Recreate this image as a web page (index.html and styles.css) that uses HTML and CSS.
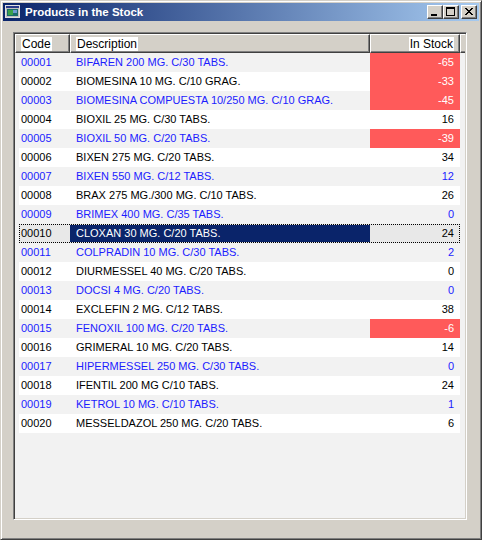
FILE: index.html
```html
<!DOCTYPE html>
<html>
<head>
<meta charset="utf-8">
<title>Products in the Stock</title>
<link rel="stylesheet" href="styles.css">
</head>
<body>
<div class="window">
  <div class="titlebar">
    <svg class="app-icon" width="16" height="16" viewBox="0 0 16 16">
      <rect x="0.5" y="1.5" width="14" height="12" fill="#c0c0c0" stroke="#e0e0e0"/>
      <rect x="1" y="2" width="13" height="2" fill="#2a3a8a"/>
      <rect x="2" y="5" width="11" height="7" fill="#1a6a6a"/>
      <rect x="3" y="6" width="5" height="5" fill="#3aa04a"/>
      <rect x="8" y="6" width="4" height="3" fill="#6a9ad0"/>
    </svg>
    <span class="title">Products in the Stock</span>
    <div class="controls">
      <span class="cbtn"><svg width="14" height="12" viewBox="0 0 14 12"><rect x="3" y="8" width="6" height="2" fill="#000"/></svg></span>
      <span class="cbtn"><svg width="14" height="12" viewBox="0 0 14 12"><rect x="2.5" y="1.5" width="8" height="8" fill="none" stroke="#000"/><rect x="2" y="1" width="9" height="2" fill="#000"/></svg></span>
      <span class="cbtn close"><svg width="14" height="12" viewBox="0 0 14 12"><path d="M3 2 L10 9 M4 2 L11 9 M10 2 L3 9 M11 2 L4 9" stroke="#000" stroke-width="1"/></svg></span>
    </div>
  </div>
  <div class="client">
    <div class="listbox">
      <div class="header">
        <div class="hcell h-code"><span class="htext">Code</span></div>
        <div class="hcell h-desc"><span class="htext">Description</span></div>
        <div class="hcell h-stock"><span class="htext">In Stock</span></div>
        <div class="hcell h-fill"></div>
      </div>
      <div class="rows">
        <div class="row odd"><span class="c-code">00001</span><span class="c-desc">BIFAREN 200 MG. C/30 TABS.</span><span class="c-stock neg">-65</span></div>
        <div class="row even"><span class="c-code">00002</span><span class="c-desc">BIOMESINA 10 MG. C/10 GRAG.</span><span class="c-stock neg">-33</span></div>
        <div class="row odd"><span class="c-code">00003</span><span class="c-desc">BIOMESINA COMPUESTA 10/250 MG. C/10 GRAG.</span><span class="c-stock neg">-45</span></div>
        <div class="row even"><span class="c-code">00004</span><span class="c-desc">BIOXIL 25 MG. C/30 TABS.</span><span class="c-stock">16</span></div>
        <div class="row odd"><span class="c-code">00005</span><span class="c-desc">BIOXIL 50 MG. C/20 TABS.</span><span class="c-stock neg">-39</span></div>
        <div class="row even"><span class="c-code">00006</span><span class="c-desc">BIXEN 275 MG. C/20 TABS.</span><span class="c-stock">34</span></div>
        <div class="row odd"><span class="c-code">00007</span><span class="c-desc">BIXEN 550 MG. C/12 TABS.</span><span class="c-stock">12</span></div>
        <div class="row even"><span class="c-code">00008</span><span class="c-desc">BRAX 275 MG./300 MG. C/10 TABS.</span><span class="c-stock">26</span></div>
        <div class="row odd"><span class="c-code">00009</span><span class="c-desc">BRIMEX 400 MG. C/35 TABS.</span><span class="c-stock">0</span></div>
        <div class="row selected"><span class="c-code">00010</span><span class="c-desc">CLOXAN 30 MG. C/20 TABS.</span><span class="c-stock">24</span></div>
        <div class="row odd"><span class="c-code">00011</span><span class="c-desc">COLPRADIN 10 MG. C/30 TABS.</span><span class="c-stock">2</span></div>
        <div class="row even"><span class="c-code">00012</span><span class="c-desc">DIURMESSEL 40 MG. C/20 TABS.</span><span class="c-stock">0</span></div>
        <div class="row odd"><span class="c-code">00013</span><span class="c-desc">DOCSI 4 MG. C/20 TABS.</span><span class="c-stock">0</span></div>
        <div class="row even"><span class="c-code">00014</span><span class="c-desc">EXCLEFIN 2 MG. C/12 TABS.</span><span class="c-stock">38</span></div>
        <div class="row odd"><span class="c-code">00015</span><span class="c-desc">FENOXIL 100 MG. C/20 TABS.</span><span class="c-stock neg">-6</span></div>
        <div class="row even"><span class="c-code">00016</span><span class="c-desc">GRIMERAL 10 MG. C/20 TABS.</span><span class="c-stock">14</span></div>
        <div class="row odd"><span class="c-code">00017</span><span class="c-desc">HIPERMESSEL 250 MG. C/30 TABS.</span><span class="c-stock">0</span></div>
        <div class="row even"><span class="c-code">00018</span><span class="c-desc">IFENTIL 200 MG C/10 TABS.</span><span class="c-stock">24</span></div>
        <div class="row odd"><span class="c-code">00019</span><span class="c-desc">KETROL 10 MG. C/10 TABS.</span><span class="c-stock">1</span></div>
        <div class="row even"><span class="c-code">00020</span><span class="c-desc">MESSELDAZOL 250 MG. C/20 TABS.</span><span class="c-stock">6</span></div>
      </div>
    </div>
  </div>
</div>
</body>
</html>
```

FILE: styles.css
```css
html, body {
  margin: 0;
  padding: 0;
  background: #d4d0c8;
}

body {
  font-family: "Liberation Sans", Arial, sans-serif;
  font-size: 11px;
}

.window {
  box-sizing: border-box;
  width: 482px;
  height: 540px;
  background: #d4d0c8;
  border-top: 1px solid #d4d0c8;
  border-left: 1px solid #d4d0c8;
  border-right: 1px solid #404040;
  border-bottom: 1px solid #404040;
  box-shadow: inset 1px 1px #ffffff, inset -1px -1px #808080;
  padding: 2px;
  display: flex;
  flex-direction: column;
}

.titlebar {
  height: 18px;
  flex: none;
  display: flex;
  align-items: center;
  background: linear-gradient(to right, #0a246a, #a6caf0);
  color: #ffffff;
}

.app-icon {
  margin-left: 2px;
  flex: none;
}

.title {
  margin-left: 4px;
  font-weight: bold;
  font-size: 11.5px;
  flex: 1;
  white-space: nowrap;
}

.controls {
  display: flex;
  align-items: center;
  margin-right: 2px;
}

.cbtn {
  box-sizing: border-box;
  width: 16px;
  height: 14px;
  background: #d4d0c8;
  border-top: 1px solid #ffffff;
  border-left: 1px solid #ffffff;
  border-right: 1px solid #404040;
  border-bottom: 1px solid #404040;
  box-shadow: inset -1px -1px #808080;
  display: flex;
  align-items: flex-start;
  justify-content: flex-start;
}

.cbtn svg {
  display: block;
}

.cbtn.close {
  margin-left: 2px;
}

.client {
  flex: 1;
  padding: 11px 12px 0 10px;
}

.listbox {
  box-sizing: border-box;
  width: 454px;
  height: 488px;
  border-top: 1px solid #808080;
  border-left: 1px solid #808080;
  border-right: 1px solid #ffffff;
  border-bottom: 1px solid #ffffff;
  box-shadow: inset 1px 1px #404040, inset -1px -1px #d4d0c8;
  padding: 1px;
  background: #f2f2f2;
  display: flex;
  flex-direction: column;
}

.header {
  display: flex;
  height: 19px;
  flex: none;
}

.hcell {
  box-sizing: border-box;
  height: 19px;
  background: #d4d0c8;
  border-top: 1px solid #ffffff;
  border-left: 1px solid #ffffff;
  border-right: 1px solid #404040;
  border-bottom: 1px solid #404040;
  box-shadow: inset -1px -1px #808080;
  display: flex;
  align-items: center;
  color: #000;
  font-size: 12px;
}

.h-code { width: 55px; padding-left: 5px; }
.h-desc { width: 300px; padding-left: 5px; }
.h-stock { width: 90px; justify-content: flex-end; padding-right: 5px; }
.h-fill { flex: 1; border-right: none; box-shadow: inset 0 -1px #808080; }

.htext {
  background: #ffffff;
  line-height: 14px;
  padding: 0 1px;
}

.rows {
  display: flex;
  flex-direction: column;
  padding-left: 4px;
}

.row {
  display: flex;
  height: 19px;
  width: 441px;
  box-sizing: border-box;
  line-height: 19px;
  font-size: 11px;
  white-space: nowrap;
}

.row.odd {
  background: #f2f2f2;
  color: #1c1cff;
}

.row.even {
  background: #ffffff;
  color: #000000;
}

.c-code {
  width: 51px;
  padding-left: 2px;
  box-sizing: border-box;
}

.c-desc {
  width: 300px;
  padding-left: 6px;
  box-sizing: border-box;
  overflow: hidden;
}

.c-stock {
  width: 90px;
  padding-right: 6px;
  box-sizing: border-box;
  text-align: right;
}

.c-stock.neg {
  background: #ff5a5a;
  color: #ffffff;
}

.row.selected {
  background: #e8e8e8;
  color: #000000;
  outline: 1px dotted #000000;
  outline-offset: -1px;
}

.row.selected .c-desc {
  background: #0a246a;
  color: #ffffff;
  margin: 1px 0;
  line-height: 17px;
}
```
